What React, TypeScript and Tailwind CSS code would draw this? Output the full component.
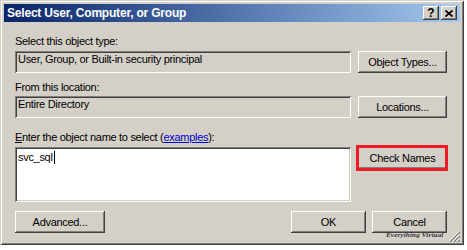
import type { ReactNode } from 'react'

function Btn({ children, className = '' }: { children: ReactNode; className?: string }) {
  return (
    <div
      className={`flex h-[22px] items-center justify-center bg-[#d4d0c8] text-black shadow-[inset_-1px_-1px_#404040,inset_1px_1px_#ffffff,inset_-2px_-2px_#808080] ${className}`}
    >
      {children}
    </div>
  )
}

function TitleBtn({ children }: { children: ReactNode }) {
  return (
    <div className="flex h-[14px] w-[16px] items-center justify-center bg-[#d4d0c8] shadow-[inset_-1px_-1px_#404040,inset_1px_1px_#ffffff,inset_-2px_-2px_#808080]">
      {children}
    </div>
  )
}

export default function App() {
  return (
    <div className="h-[250px] w-[467px] bg-white font-['Liberation_Sans',Arial,sans-serif] text-[11px] leading-[13px] tracking-[-0.3px] text-black">
      <div className="relative flex h-[245px] w-[464px] flex-col bg-[#d4d0c8] p-[4px] shadow-[inset_1px_1px_#d4d0c8,inset_-1px_-1px_#404040,inset_2px_2px_#ffffff,inset_-2px_-2px_#808080]">
        {/* Title bar */}
        <div className="flex h-[18px] items-center gap-[2px] bg-gradient-to-r from-[#0a246a] to-[#a6caf0] pl-[3px] pr-[3px]">
          <span className="flex-1 text-[12px] font-bold leading-[18px] tracking-[-0.2px] text-white">
            Select User, Computer, or Group
          </span>
          <TitleBtn>
            <span className="text-[12px] font-bold leading-[12px] tracking-normal">?</span>
          </TitleBtn>
          <TitleBtn>
            <svg width="8" height="7" viewBox="0 0 8 7">
              <path d="M0.5 0.5 L7.5 6.5 M7.5 0.5 L0.5 6.5" stroke="#000" strokeWidth="1.6" />
            </svg>
          </TitleBtn>
        </div>

        {/* Body */}
        <div className="flex flex-col pl-[11px] pr-[13px]">
          <div className="mt-[13px]">Select this object type:</div>
          <div className="mt-[3px] flex gap-[7px]">
            <div className="h-[22px] flex-1 bg-[#d4d0c8] pl-[3px] pt-[2px] shadow-[inset_1px_1px_#808080,inset_-1px_-1px_#ffffff,inset_2px_2px_#404040,inset_-2px_-2px_#d4d0c8]">
              User, Group, or Built-in security principal
            </div>
            <Btn className="w-[89px]">Object Types...</Btn>
          </div>

          <div className="mt-[8px]">From this location:</div>
          <div className="mt-[2px] flex gap-[7px]">
            <div className="h-[22px] flex-1 bg-[#d4d0c8] pl-[3px] pt-[2px] shadow-[inset_1px_1px_#808080,inset_-1px_-1px_#ffffff,inset_2px_2px_#404040,inset_-2px_-2px_#d4d0c8]">
              Entire Directory
            </div>
            <Btn className="w-[89px]">Locations...</Btn>
          </div>

          <div className="mt-[13px]">
            <span className="underline">E</span>nter the object name to select (
            <span className="text-[#0000cc] underline">examples</span>):
          </div>
          <div className="mt-[3px] flex items-start gap-[7px]">
            <div className="h-[55px] flex-1 bg-white pl-[3px] pt-[4px] shadow-[inset_1px_1px_#808080,inset_-1px_-1px_#ffffff,inset_2px_2px_#404040,inset_-2px_-2px_#d4d0c8]">
              svc_sql<span className="ml-[1px] inline-block h-[13px] w-px bg-black align-top" />
            </div>
            <div className="relative w-[89px]">
              <Btn>Check Names</Btn>
              {/* red highlight annotation */}
              <div className="absolute -bottom-[2px] -left-[2px] -right-[1px] -top-[2px] border-[3px] border-[#ed1c24]" />
            </div>
          </div>

          <div className="mt-[9px] flex gap-[6px]">
            <Btn className="w-[90px]">Advanced...</Btn>
            <div className="flex-1" />
            <Btn className="w-[75px]">OK</Btn>
            <Btn className="w-[75px]">Cancel</Btn>
          </div>
        </div>

        {/* watermark */}
        <div className="absolute left-[386px] top-[231px] font-['Liberation_Serif',serif] text-[7px] font-bold italic leading-[8px] tracking-[0.2px] text-[#333]">
          Everything Virtual
        </div>
        {/* size grip */}
        <svg className="absolute left-[448px] top-[230px]" width="12" height="12" viewBox="0 0 12 12">
          <path d="M11 1 L1 11 M11 5 L5 11 M11 9 L9 11" stroke="#ffffff" strokeWidth="1" />
          <path d="M12 2 L2 12 M12 6 L6 12 M12 10 L10 12" stroke="#808080" strokeWidth="1.2" />
        </svg>
      </div>
    </div>
  )
}
